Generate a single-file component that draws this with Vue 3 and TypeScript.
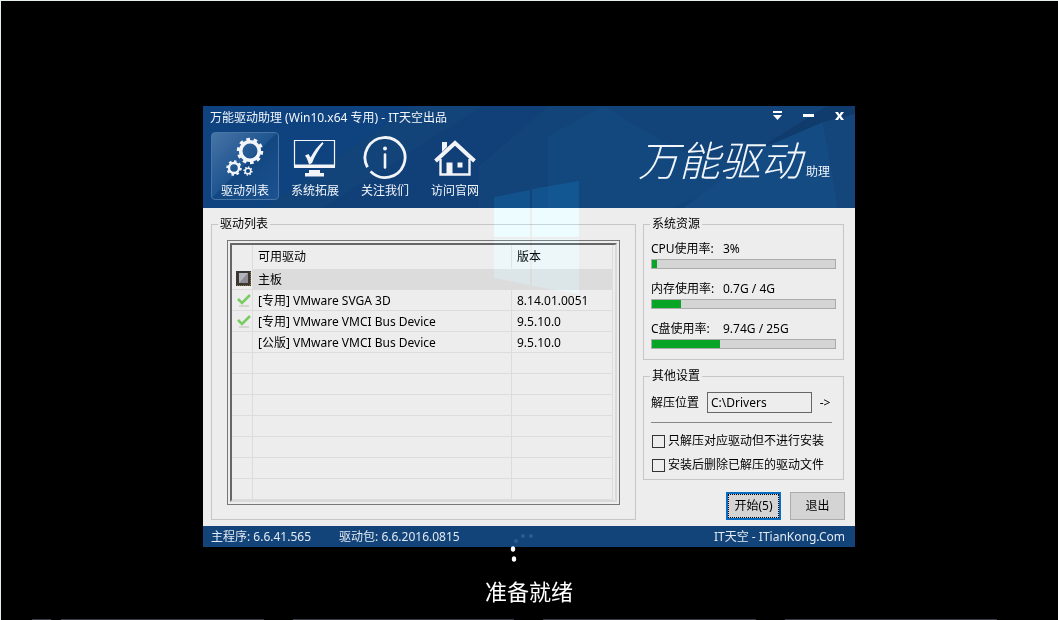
<script setup lang="ts">
import { ref } from 'vue'

interface Driver {
  name: string
  version: string
  recommended: boolean
}

interface Usage {
  label: string
  value: string
  percent: number
}

const tools = ['驱动列表', '系统拓展', '关注我们', '访问官网']
const active = ref(0)

const drivers: Driver[] = [
  { name: '[专用] VMware SVGA 3D', version: '8.14.01.0051', recommended: true },
  { name: '[专用] VMware VMCI Bus Device', version: '9.5.10.0', recommended: true },
  { name: '[公版] VMware VMCI Bus Device', version: '9.5.10.0', recommended: false },
]
const emptyRows = 7

const usages: Usage[] = [
  { label: 'CPU使用率:', value: '3%', percent: 3 },
  { label: '内存使用率:', value: '0.7G / 4G', percent: 16 },
  { label: 'C盘使用率:', value: '9.74G / 25G', percent: 37 },
]

const target = ref('C:\\Drivers')
const extractOnly = ref(false)
const cleanUp = ref(false)
</script>

<template>
  <main class="screen">
    <section class="dialog" aria-labelledby="dialog-title">
      <header class="header">
        <svg class="facets" viewBox="0 0 652 102" preserveAspectRatio="none" aria-hidden="true">
          <polygon points="0,0 210,0 60,102 0,102" fill="#0f4380" />
          <polygon points="280,0 345,0 276,60 276,102 120,102" fill="#113f77" />
          <polygon points="400,0 480,46 560,60 470,102 345,102 345,30" fill="#12487e" />
          <polygon points="624,0 652,0 652,14 560,40" fill="#103b6d" />
          <polygon points="560,42 620,16 635,102 480,102" fill="#144b82" />
          <polygon points="620,16 652,8 652,102 635,102" fill="#14467b" />
        </svg>
        <div class="titlebar">
          <h1 id="dialog-title">万能驱动助理 (Win10.x64 专用) - IT天空出品</h1>
          <div class="window-buttons">
            <button type="button" aria-label="菜单">
              <svg viewBox="0 0 11 10"><path d="M1 0H10V2H1ZM1 4H10L5.500 9Z" /></svg>
            </button>
            <button type="button" aria-label="最小化">
              <svg viewBox="0 0 11 10"><path d="M0 3H11V6H0Z" /></svg>
            </button>
            <button type="button" aria-label="关闭">
              <svg viewBox="0 0 11 10"><path d="M1 1H4L5.500 3.500 7 1H10L7 5 10 9H7L5.500 6.500 4 9H1L4 5Z" /></svg>
            </button>
          </div>
        </div>
        <div class="toolbar">
          <nav class="tools">
            <button
              v-for="(tool, i) in tools"
              :key="tool"
              type="button"
              class="tool"
              :class="{ active: active === i }"
              @click="active = i"
            >
              <svg v-if="i === 0" viewBox="0 0 48 44" fill="none" stroke="#f2f4f8">
                <circle cx="29" cy="16" r="9.300" stroke-width="3.600" />
                <circle cx="29" cy="16" r="11.500" stroke-width="3.500" pathLength="20" stroke-dasharray="1 1" />
                <circle cx="13" cy="33" r="5" stroke-width="2.400" />
                <circle cx="13" cy="33" r="6.500" stroke-width="2.500" pathLength="16" stroke-dasharray="1 1" />
                <circle cx="27" cy="36" r="2.800" stroke-width="1.500" />
                <circle cx="27" cy="36" r="3.900" stroke-width="1.500" pathLength="16" stroke-dasharray="1 1" />
              </svg>
              <svg v-else-if="i === 1" viewBox="0 0 48 44" fill="#f2f4f8">
                <path d="M3.500 5.500H43.500V31H3.500Z" fill="none" stroke="#f2f4f8" stroke-width="1.200" />
                <path d="M3 29.500H44V33H3Z" />
                <path d="M18 35H29V38H33V41.500H14V38H18Z" />
                <path d="M14 20.500L17.500 19 19.500 22.500C23 16 27 11 31.500 7L32.500 8.500C28 14 24 20.500 21 28L18 29.500C17 26 16 23 14 20.500Z" />
              </svg>
              <svg v-else-if="i === 2" viewBox="0 0 48 44" fill="none" stroke="#f2f4f8">
                <path d="M6.500 32.200A20 20 0 1 1 9.600 36.400" stroke-width="2.800" />
                <circle cx="24" cy="13.500" r="2" fill="#f2f4f8" stroke="none" />
                <path d="M24 19.500V32.500" stroke-width="2.600" stroke-linecap="round" />
              </svg>
              <svg v-else viewBox="0 0 48 44" fill="#f2f4f8">
                <path d="M11 7H16V12L11 17Z" />
                <path d="M4.500 26L24 8 43.500 26" fill="none" stroke="#f2f4f8" stroke-width="4" />
                <path d="M9.500 24V39.500H38.500V24" fill="none" stroke="#f2f4f8" stroke-width="2.400" />
                <path d="M15.500 27.500H21.500V39H15.500ZM26.500 27.500H31.500V32.500H26.500Z" />
              </svg>
              <span>{{ tool }}</span>
            </button>
          </nav>
          <p class="brand"><strong>万能驱动</strong><span>助理</span></p>
        </div>
      </header>

      <div class="body">
        <fieldset class="drivers">
          <legend>驱动列表</legend>
          <div class="list-frame">
            <div class="list">
              <table>
                <colgroup>
                  <col class="col-mark" />
                  <col />
                  <col class="col-version" />
                </colgroup>
                <thead>
                  <tr>
                    <th aria-label="状态"></th>
                    <th scope="col">可用驱动</th>
                    <th scope="col">版本</th>
                  </tr>
                </thead>
                <tbody>
                  <tr class="group">
                    <td>
                      <svg class="mark" viewBox="0 0 16 16" aria-hidden="true">
                        <rect x="0" y="0" width="15" height="15" fill="#3b3833" />
                        <path d="M14.500 1V15M1 14.500H15" stroke="#8a7a3c" stroke-dasharray="1 1" />
                        <rect x="3" y="2" width="9" height="10" fill="#8d8d95" />
                        <path d="M3 12V2H12Z" fill="#b4b4bc" />
                      </svg>
                    </td>
                    <td colspan="2">主板</td>
                  </tr>
                  <tr v-for="driver in drivers" :key="driver.name">
                    <td>
                      <svg v-if="driver.recommended" class="mark" viewBox="0 0 16 16" aria-hidden="true">
                        <path d="M3 14H13" stroke="#d3d6d0" stroke-width="2" />
                        <path d="M2 7L6 11 14 3" fill="none" stroke="#78cc60" stroke-width="2.500" />
                      </svg>
                    </td>
                    <td>{{ driver.name }}</td>
                    <td>{{ driver.version }}</td>
                  </tr>
                  <tr v-for="n in emptyRows" :key="n">
                    <td></td>
                    <td></td>
                    <td></td>
                  </tr>
                </tbody>
              </table>
            </div>
          </div>
        </fieldset>

        <div class="side">
          <fieldset class="resources">
            <legend>系统资源</legend>
            <div v-for="usage in usages" :key="usage.label" class="usage">
              <div class="usage-text">
                <span>{{ usage.label }}</span>
                <span>{{ usage.value }}</span>
              </div>
              <div
                class="bar"
                role="progressbar"
                :aria-label="usage.label"
                :aria-valuenow="usage.percent"
                aria-valuemin="0"
                aria-valuemax="100"
              >
                <div class="fill" :style="{ width: usage.percent + '%' }"></div>
              </div>
            </div>
          </fieldset>

          <fieldset class="settings">
            <legend>其他设置</legend>
            <div class="path-row">
              <label for="target">解压位置</label>
              <input id="target" v-model="target" type="text" />
              <button type="button" class="browse">-&gt;</button>
            </div>
            <hr />
            <label class="check"><input v-model="extractOnly" type="checkbox" />只解压对应驱动但不进行安装</label>
            <label class="check"><input v-model="cleanUp" type="checkbox" />安装后删除已解压的驱动文件</label>
          </fieldset>

          <div class="actions">
            <button type="button" class="action primary">开始(5)</button>
            <button type="button" class="action">退出</button>
          </div>
        </div>
      </div>

      <footer class="status">
        <span>主程序: 6.6.41.565</span>
        <span>驱动包: 6.6.2016.0815</span>
        <a href="#">IT天空 - ITianKong.Com</a>
      </footer>

      <svg class="ghost" viewBox="0 0 86 114" aria-hidden="true">
        <path d="M0 16L36 9V56H0ZM38 8L85 0V56H38Z" fill="rgb(0,15,20)" />
        <path d="M0 58H36V104L0 97ZM38 58H85V113L38 105Z" fill="rgb(0,10,13)" />
      </svg>
      <svg class="spinner" viewBox="0 0 30 34" aria-hidden="true">
        <g fill="#2c5c92">
          <circle cx="7" cy="12" r="2" />
          <circle cx="14" cy="7" r="2" />
          <circle cx="22" cy="7" r="2" />
        </g>
        <g fill="#fff">
          <ellipse cx="4" cy="20" rx="2.200" ry="2.800" />
          <ellipse cx="5" cy="30" rx="2.200" ry="2.800" />
        </g>
      </svg>
    </section>
    <p class="ready">准备就绪</p>
    <div class="edge"></div>
  </main>
</template>

<style>
body {
  background: #000;
}
</style>

<style scoped>
* {
  box-sizing: border-box;
}

.screen {
  min-height: 100vh;
  display: flex;
  flex-direction: column;
  align-items: center;
  padding: 105px 1px 0 0;
  border-top: 1px solid #e4efee;
  border-left: 1px solid #e4efee;
  background: #000;
  color: #000;
  font-family: "Noto Sans", "Noto Sans CJK SC", sans-serif;
  font-size: 12px;
  line-height: 16px;
}

button,
input {
  font: inherit;
  color: inherit;
  margin: 0;
}

.dialog {
  position: relative;
  width: 100%;
  max-width: 652px;
  background: #ededed;
}

.header {
  position: relative;
  isolation: isolate;
  background: #124379;
  color: #f2f6fb;
  padding-bottom: 8px;
}

.facets {
  position: absolute;
  inset: 0;
  width: 100%;
  height: 100%;
  z-index: -1;
}

.titlebar {
  display: flex;
  justify-content: space-between;
  align-items: center;
  height: 26px;
  padding: 0 10px 3px 7px;
}

h1 {
  margin: 0;
  font-size: 12px;
  font-weight: 400;
}

.window-buttons {
  display: flex;
  gap: 20px;
  padding-bottom: 4px;
}

.window-buttons button {
  width: 11px;
  height: 10px;
  padding: 0;
  border: 0;
  background: none;
}

.window-buttons svg {
  display: block;
  fill: #fff;
}

.toolbar {
  display: flex;
  justify-content: space-between;
  padding: 0 25px 0 8px;
}

.tools {
  display: flex;
  gap: 2px;
}

.tool {
  width: 68px;
  height: 68px;
  padding: 2px 0 0;
  display: flex;
  flex-direction: column;
  align-items: center;
  gap: 4px;
  border: 1px solid transparent;
  border-radius: 4px;
  background: none;
}

.tool.active {
  border-color: #4975a5;
  background: linear-gradient(135deg, #4674a6 0%, #1f5590 48%, #124781 50%, #1b5290 100%);
}

.tool svg {
  width: 48px;
  height: 44px;
}

.brand {
  display: flex;
  align-items: baseline;
  gap: 4px;
  margin: 0;
  padding-top: 10px;
}

.brand strong {
  font-family: "Noto Sans CJK SC", sans-serif;
  font-size: 41px;
  line-height: 32px;
  font-weight: 300;
  font-style: italic;
}

.body {
  display: grid;
  grid-template-columns: 1fr 201px;
  gap: 7px;
  padding: 8px 11px 6px 8px;
}

fieldset {
  min-width: 0;
  margin: 0;
  border: 1px solid #c6c6c6;
}

legend {
  padding: 0 2px;
}

.drivers {
  padding: 8px 15px 14px;
}

.drivers legend {
  margin-left: -9px;
}

.list-frame {
  padding: 2px;
  border: 1px solid #777;
}

.list {
  padding-right: 2px;
  border: 2px solid #dadada;
  border-top-color: #666;
  border-left-color: #666;
}

table {
  width: 100%;
  table-layout: fixed;
  border-collapse: separate;
  border-spacing: 0;
}

.col-mark {
  width: 21px;
}

.col-version {
  width: 101px;
}

th,
td {
  height: 21px;
  padding: 2px 0 0 5px;
  border-right: 1px solid #dcdcdc;
  border-bottom: 1px solid #dcdcdc;
  text-align: left;
  font-weight: 400;
  white-space: nowrap;
}

th {
  height: 24px;
  padding-top: 0;
  border-bottom-color: #ededed;
}

th:first-child,
td:first-child {
  padding: 0 0 0 4px;
}

.group td {
  background: #dcdcdc;
}

.group td:first-child {
  background: #ededed;
}

.mark {
  display: block;
  width: 16px;
  height: 16px;
}

.side {
  display: flex;
  flex-direction: column;
}

.resources {
  padding: 9px 7px 10px;
}

.resources legend,
.settings legend {
  margin-left: -1px;
}

.usage + .usage {
  margin-top: 12px;
}

.usage-text {
  display: grid;
  grid-template-columns: 72px 1fr;
  margin-bottom: 2px;
}

.bar {
  height: 10px;
  border: 1px solid #ababab;
  background: #d5d5d5;
}

.fill {
  height: 100%;
  background: #09a526;
}

.settings {
  margin-top: 8px;
  padding: 8px 7px 5px;
}

.path-row {
  display: flex;
  align-items: center;
}

.path-row input {
  flex: 1;
  min-width: 0;
  height: 21px;
  margin-left: 8px;
  padding: 0 3px;
  border: 1px solid #666;
  background: #ededed;
}

.browse {
  width: 24px;
  padding: 0 0 0 2px;
  border: 0;
  background: none;
}

hr {
  margin: 9px 4px 9px 0;
  border: 0;
  border-top: 1px solid #888;
}

.check {
  display: flex;
  align-items: center;
  gap: 3px;
  height: 18px;
  padding-left: 1px;
  white-space: nowrap;
}

.check + .check {
  margin-top: 6px;
}

.check input {
  appearance: none;
  width: 13px;
  height: 13px;
  border: 1px solid #333;
  background: #ededed;
}

.check input:checked {
  background: #0f6fc0;
}

.actions {
  display: flex;
  justify-content: flex-end;
  gap: 9px;
  margin: 12px -1px 0 0;
}

.action {
  width: 55px;
  height: 28px;
  padding: 0;
  border: 1px solid #acacac;
  background: #d4d4d4;
}

.action.primary {
  border: 2px solid #0a6cc0;
  outline: 1px dotted #000;
  outline-offset: -3px;
}

.status {
  display: flex;
  align-items: center;
  gap: 28px;
  height: 21px;
  padding: 0 10px 0 8px;
  background: #124379;
  color: #e2eaf3;
}

.status a {
  margin-left: auto;
  color: inherit;
  text-decoration: none;
}

/* translucent desktop emblem floating over the dialog */
.ghost {
  position: absolute;
  top: 75px;
  left: 291px;
  width: 86px;
  height: 114px;
  mix-blend-mode: plus-lighter;
  pointer-events: none;
}

.spinner {
  position: absolute;
  top: 423px;
  left: 306px;
  width: 30px;
  height: 34px;
  pointer-events: none;
}

.ready {
  margin: 28px 0 0;
  color: #fff;
  font-size: 22px;
  line-height: 32px;
}

.edge {
  align-self: stretch;
  height: 1px;
  margin: auto 60px 0 31px;
  background: linear-gradient(90deg, #3a3a44 2%, #000 2% 3%, #3a3a44 3% 24%, #000 24% 27%, #3a3a44 27% 50%, #000 50% 53%, #3a3a44 53% 75%, #000 75% 78%, #3a3a44 78%);
}
</style>
